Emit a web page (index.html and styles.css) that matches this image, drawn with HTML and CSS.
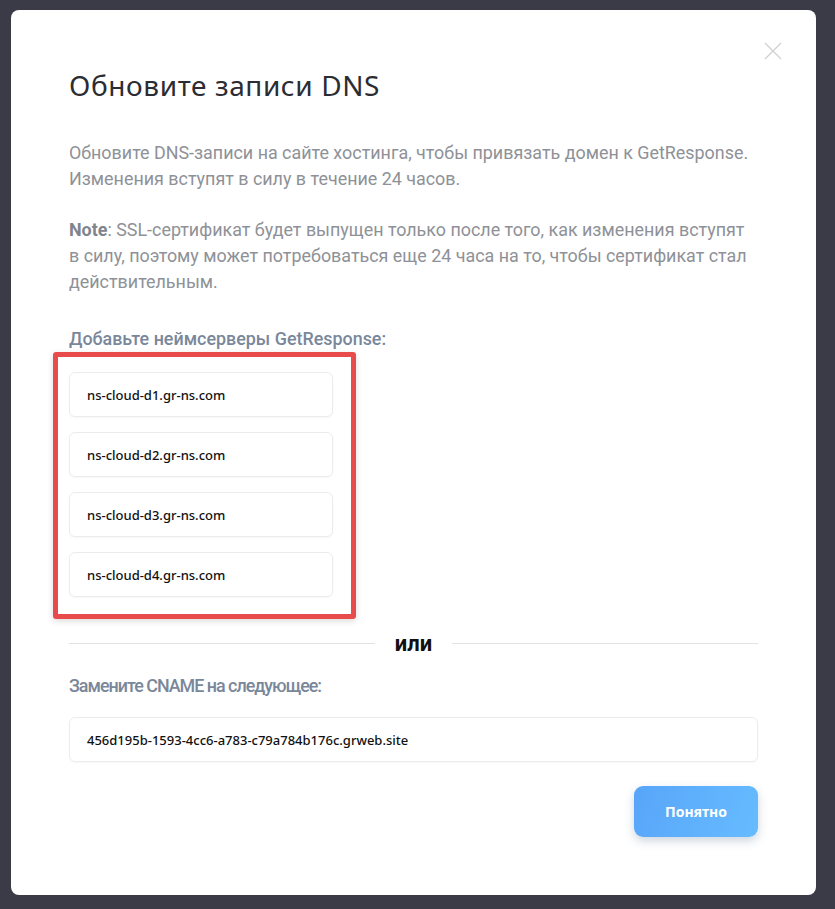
FILE: index.html
```html
<!DOCTYPE html>
<html lang="ru">
<head>
  <meta charset="UTF-8">
  <meta name="viewport" content="width=device-width, initial-scale=1.0">
  <title>Обновите записи DNS</title>
  <link rel="stylesheet" href="styles.css">
</head>
<body>

  <div class="modal">
    <button class="close" aria-label="Закрыть">
      <svg width="18" height="18" viewBox="0 0 18 18">
        <path d="M1 1 L17 17 M17 1 L1 17" stroke="#cfcfd2" stroke-width="1.2" fill="none"/>
      </svg>
    </button>

    <h1 class="title">Обновите записи DNS</h1>

    <p class="text">Обновите DNS-записи на сайте хостинга, чтобы привязать домен к GetResponse. Изменения вступят в силу в течение 24 часов.</p>
    <p class="text"><b>Note</b>: SSL-сертификат будет выпущен только после того, как изменения вступят в силу, поэтому может потребоваться еще 24 часа на то, чтобы сертификат стал действительным.</p>

    <div class="label">Добавьте неймсерверы GetResponse:</div>

    <div class="servers">
      <div class="field">ns-cloud-d1.gr-ns.com</div>
      <div class="field">ns-cloud-d2.gr-ns.com</div>
      <div class="field">ns-cloud-d3.gr-ns.com</div>
      <div class="field">ns-cloud-d4.gr-ns.com</div>
    </div>

    <div class="divider"><span>или</span></div>

    <div class="label narrow">Замените CNAME на следующее:</div>
    <div class="field">456d195b-1593-4cc6-a783-c79a784b176c.grweb.site</div>

    <div class="actions">
      <button class="ok">Понятно</button>
    </div>
  </div>

</body>
</html>
```

FILE: styles.css
```css
body {
  margin: 0;
  height: 909px;
  background: #3a3b46;
  font-family: Roboto, 'Noto Sans', sans-serif;
}

.modal {
  position: relative;
  box-sizing: border-box;
  margin: 10px 0 0 11px;
  width: 805px;
  height: 885px;
  padding: 57px 58px 0 58px;
  background: #fff;
  border-radius: 8px;
}

.close {
  position: absolute;
  top: 32px;
  right: 34px;
  padding: 0;
  border: none;
  background: none;
  cursor: pointer;
}

.title {
  margin: 0 0 37px;
  font-family: 'Noto Sans', sans-serif;
  font-weight: 400;
  font-size: 28px;
  line-height: 36px;
  letter-spacing: 0.6px;
  color: #2b2d33;
}

.text {
  margin: 0 0 25px;
  font-size: 17.9px;
  line-height: 26px;
  color: #8e9197;
}

.text b {
  font-weight: 700;
  color: #80848c;
}

.label {
  margin-top: 32px;
  font-size: 17.9px;
  font-weight: 500;
  line-height: 24px;
  color: #7a879a;
}

.label.narrow {
  margin-top: 18px;
  letter-spacing: -1px;
}

.servers {
  position: relative;
  display: flex;
  flex-direction: column;
  gap: 15px;
  margin-top: 21px;
  width: 264px;
}

.servers::after {
  content: '';
  position: absolute;
  top: -20px;
  left: -16px;
  right: -23px;
  bottom: -22px;
  border: 5px solid #e84b4b;
  border-radius: 3px;
  box-shadow: 0 2px 6px rgba(0, 0, 0, 0.15);
}

.field {
  box-sizing: border-box;
  height: 45px;
  padding: 0 17px;
  display: flex;
  align-items: center;
  border: 1px solid #ececef;
  border-radius: 6px;
  box-shadow: 0 1px 2px rgba(0, 0, 0, 0.04);
  font-family: 'Noto Sans', sans-serif;
  font-weight: 500;
  font-size: 13px;
  color: #111;
}

.label.narrow + .field {
  margin-top: 19px;
}

.divider {
  display: flex;
  align-items: center;
  gap: 20px;
  margin-top: 34px;
  font-size: 22px;
  font-weight: 700;
  color: #111;
}

.divider::before,
.divider::after {
  content: '';
  flex: 1;
  height: 1px;
  background: #e1e2e5;
}

.actions {
  display: flex;
  justify-content: flex-end;
  margin-top: 24px;
}

.ok {
  width: 124px;
  height: 51px;
  border: none;
  border-radius: 9px;
  background: linear-gradient(110deg, #58a5f9, #66bcff);
  box-shadow: 0 4px 10px rgba(60, 90, 130, 0.25);
  color: #fff;
  font-family: 'Noto Sans', sans-serif;
  font-weight: 700;
  font-size: 14px;
  cursor: pointer;
}
```
